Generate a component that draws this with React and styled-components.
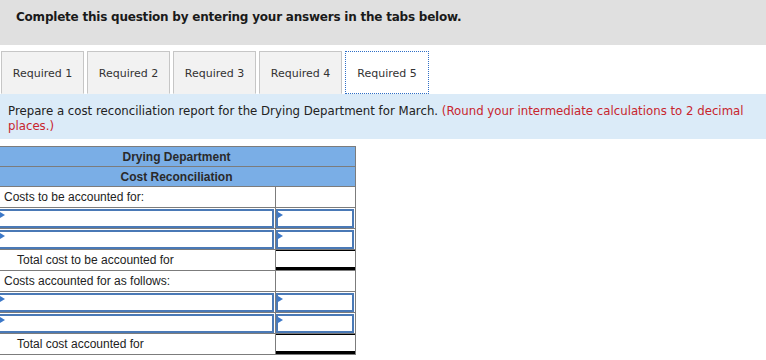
import React from 'react'
import styled, { createGlobalStyle } from 'styled-components'

const GlobalStyle = createGlobalStyle`
  body {
    margin: 0;
    background: #ffffff;
    font-family: "DejaVu Sans", Verdana, sans-serif;
    color: #222;
  }
`

const tabs = ['Required 1', 'Required 2', 'Required 3', 'Required 4', 'Required 5']

const rows = [
  { kind: 'label', text: 'Costs to be accounted for:' },
  { kind: 'input' },
  { kind: 'input' },
  { kind: 'total', text: 'Total cost to be accounted for' },
  { kind: 'label', text: 'Costs accounted for as follows:' },
  { kind: 'input' },
  { kind: 'input' },
  { kind: 'total', text: 'Total cost accounted for' },
]

function App() {
  return (
    <Page>
      <GlobalStyle />
      <Banner>Complete this question by entering your answers in the tabs below.</Banner>

      <TabRow>
        {tabs.map((t, i) => (
          <Tab key={t} $active={i === tabs.length - 1}>{t}</Tab>
        ))}
      </TabRow>

      <Prompt>
        Prepare a cost reconciliation report for the Drying Department for March.{' '}
        <Hint>(Round your intermediate calculations to 2 decimal places.)</Hint>
      </Prompt>

      <Report>
        <colgroup>
          <col style={{ width: 278 }} />
          <col style={{ width: 80 }} />
        </colgroup>
        <tbody>
          <tr>
            <HeadCell colSpan={2}>Drying Department</HeadCell>
          </tr>
          <tr>
            <HeadCell colSpan={2}>Cost Reconciliation</HeadCell>
          </tr>
          {rows.map((r, i) => {
            if (r.kind === 'input') {
              return (
                <tr key={i}>
                  <InputCell><Field><Marker /></Field></InputCell>
                  <InputCell><Field><Marker /></Field></InputCell>
                </tr>
              )
            }
            return (
              <tr key={i}>
                <LabelCell $indent={r.kind === 'total'}>{r.text}</LabelCell>
                <AmountCell $total={r.kind === 'total'} />
              </tr>
            )
          })}
        </tbody>
      </Report>
    </Page>
  )
}

export default App

const Page = styled.div`
  width: 766px;
  height: 360px;
  overflow: hidden;
`

const Banner = styled.div`
  height: 45px;
  background: #e0e0e0;
  padding: 10px 0 0 16px;
  box-sizing: border-box;
  font-size: 12px;
  letter-spacing: -0.22px;
  font-weight: bold;
  color: #1a1a1a;
`

const TabRow = styled.div`
  display: flex;
  gap: 3px;
  margin-top: 6px;
  padding-left: 1px;
`

const Tab = styled.div`
  width: ${p => (p.$active ? '84px' : '83px')};
  height: 43px;
  box-sizing: border-box;
  display: flex;
  align-items: center;
  justify-content: center;
  padding-top: 1px;
  font-size: 11px;
  color: #333;
  background: ${p => (p.$active ? '#ffffff' : '#f2f2f2')};
  border: ${p => (p.$active ? '1px dotted #2f6fc6' : '1px solid #c6c6c6')};
  border-bottom: ${p => (p.$active ? '1px dotted #2f6fc6' : '1px solid transparent')};
`

const Prompt = styled.div`
  background: #dbebf8;
  height: 45px;
  box-sizing: border-box;
  padding: 10px 8px 0 8px;
  font-size: 11.75px;
  line-height: 15px;
  color: #222;
`

const Hint = styled.span`
  color: #c8262e;
`

const Report = styled.table`
  margin: 7px 0 0 -3px;
  width: 358px;
  border-collapse: collapse;
  font-family: "Liberation Sans", Arial, sans-serif;
  font-size: 12px;
  color: #222;
  table-layout: fixed;

  td {
    height: 21px;
    padding: 0;
    border: 1px solid #7c7c7c;
    box-sizing: border-box;
  }
`

const HeadCell = styled.td`
  background: #7aaee6;
  text-align: center;
  font-weight: bold;
  color: #2a2a2a;

  && {
    height: 20px;
  }
`

const LabelCell = styled.td`
  padding-left: ${p => (p.$indent ? '19px' : '6px')} !important;
  white-space: nowrap;
`

const AmountCell = styled.td`
  ${p => p.$total && `
    box-shadow: inset 0 1px 0 #000, inset 0 -3px 0 #000;
  `}
`

const InputCell = styled.td`
  position: relative;
`

const Field = styled.div`
  position: relative;
  height: 19px;
  box-sizing: border-box;
  border: 2px solid #4a79b6;
  margin: 0 1px 0 0;
  background: #fff;
`

const Marker = styled.span`
  position: absolute;
  left: 0;
  top: 1px;
  width: 0;
  height: 0;
  border-top: 3px solid transparent;
  border-bottom: 3px solid transparent;
  border-left: 5px solid #3c78c8;
`
